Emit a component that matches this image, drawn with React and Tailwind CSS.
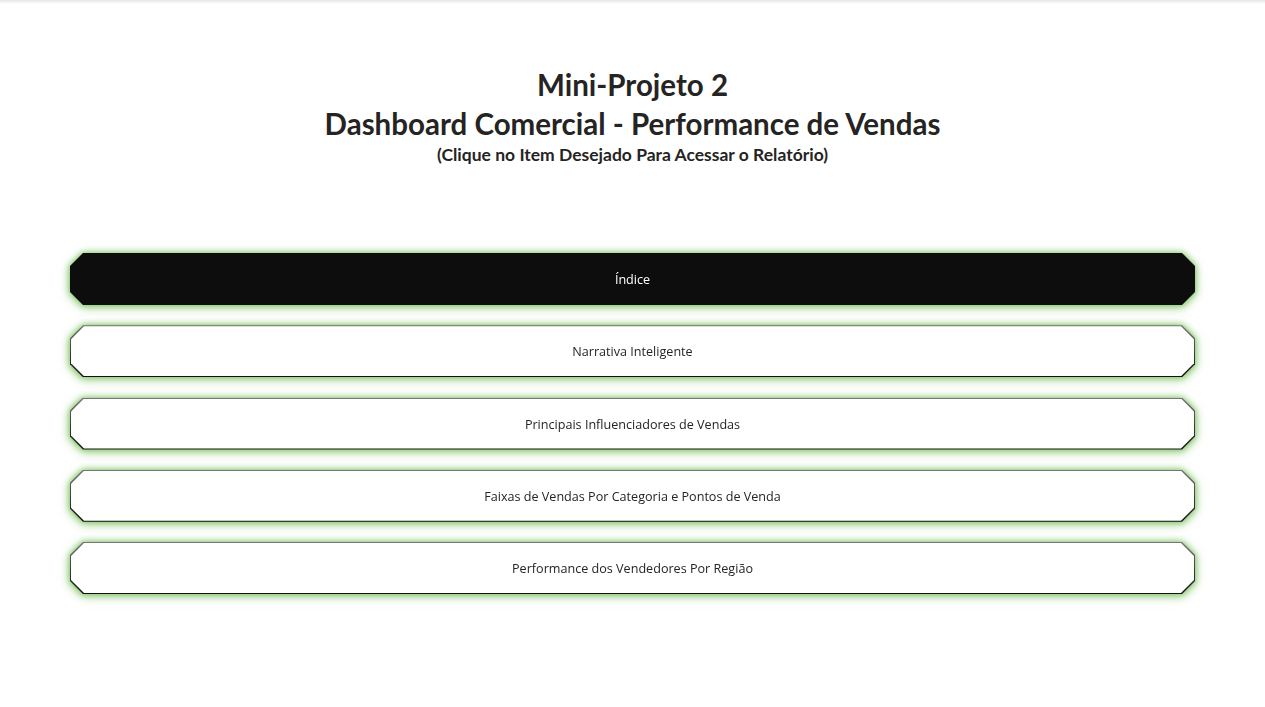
const items = [
  "Índice",
  "Narrativa Inteligente",
  "Principais Influenciadores de Vendas",
  "Faixas de Vendas Por Categoria e Pontos de Venda",
  "Performance dos Vendedores Por Região",
];

const cut =
  "[clip-path:polygon(13px_0,calc(100%-13px)_0,100%_13px,100%_calc(100%-13px),calc(100%-13px)_100%,13px_100%,0_calc(100%-13px),0_13px)]";

function MenuItem({ label, active }) {
  return (
    <div className="[filter:drop-shadow(0_0_3px_rgba(110,190,80,0.9))_drop-shadow(0_2px_4px_rgba(120,190,90,0.6))]">
      <div
        className={`h-[52px] p-px ${cut} ${
          active ? "bg-[#0d0d0d]" : "bg-gradient-to-b from-[#777] to-[#111]"
        }`}
      >
        <div
          className={`h-full flex items-center justify-center pt-[3px] ${cut} ${
            active ? "bg-[#0d0d0d] text-white" : "bg-white text-[#252423]"
          }`}
        >
          <span className="text-[12.6px] font-['Open_Sans',sans-serif]">{label}</span>
        </div>
      </div>
    </div>
  );
}

export default function App() {
  return (
    <div className="min-h-screen bg-white">
      <div className="h-[4px] bg-gradient-to-b from-[#e6e6e6] to-white" />
      <div className="text-center text-[#252423] font-['Lato',sans-serif] font-bold pt-[61px]">
        <h1 className="text-[29.5px] leading-[39px]">Mini-Projeto 2</h1>
        <h2 className="text-[29.5px] leading-[39px]">
          Dashboard Comercial - Performance de Vendas
        </h2>
        <p className="text-[17.5px] leading-[24px]">
          (Clique no Item Desejado Para Acessar o Relatório)
        </p>
      </div>
      <div className="mx-[70px] mt-[86px] flex flex-col gap-[20.25px]">
        {items.map((it, i) => (
          <MenuItem key={it} label={it} active={i === 0} />
        ))}
      </div>
    </div>
  );
}
